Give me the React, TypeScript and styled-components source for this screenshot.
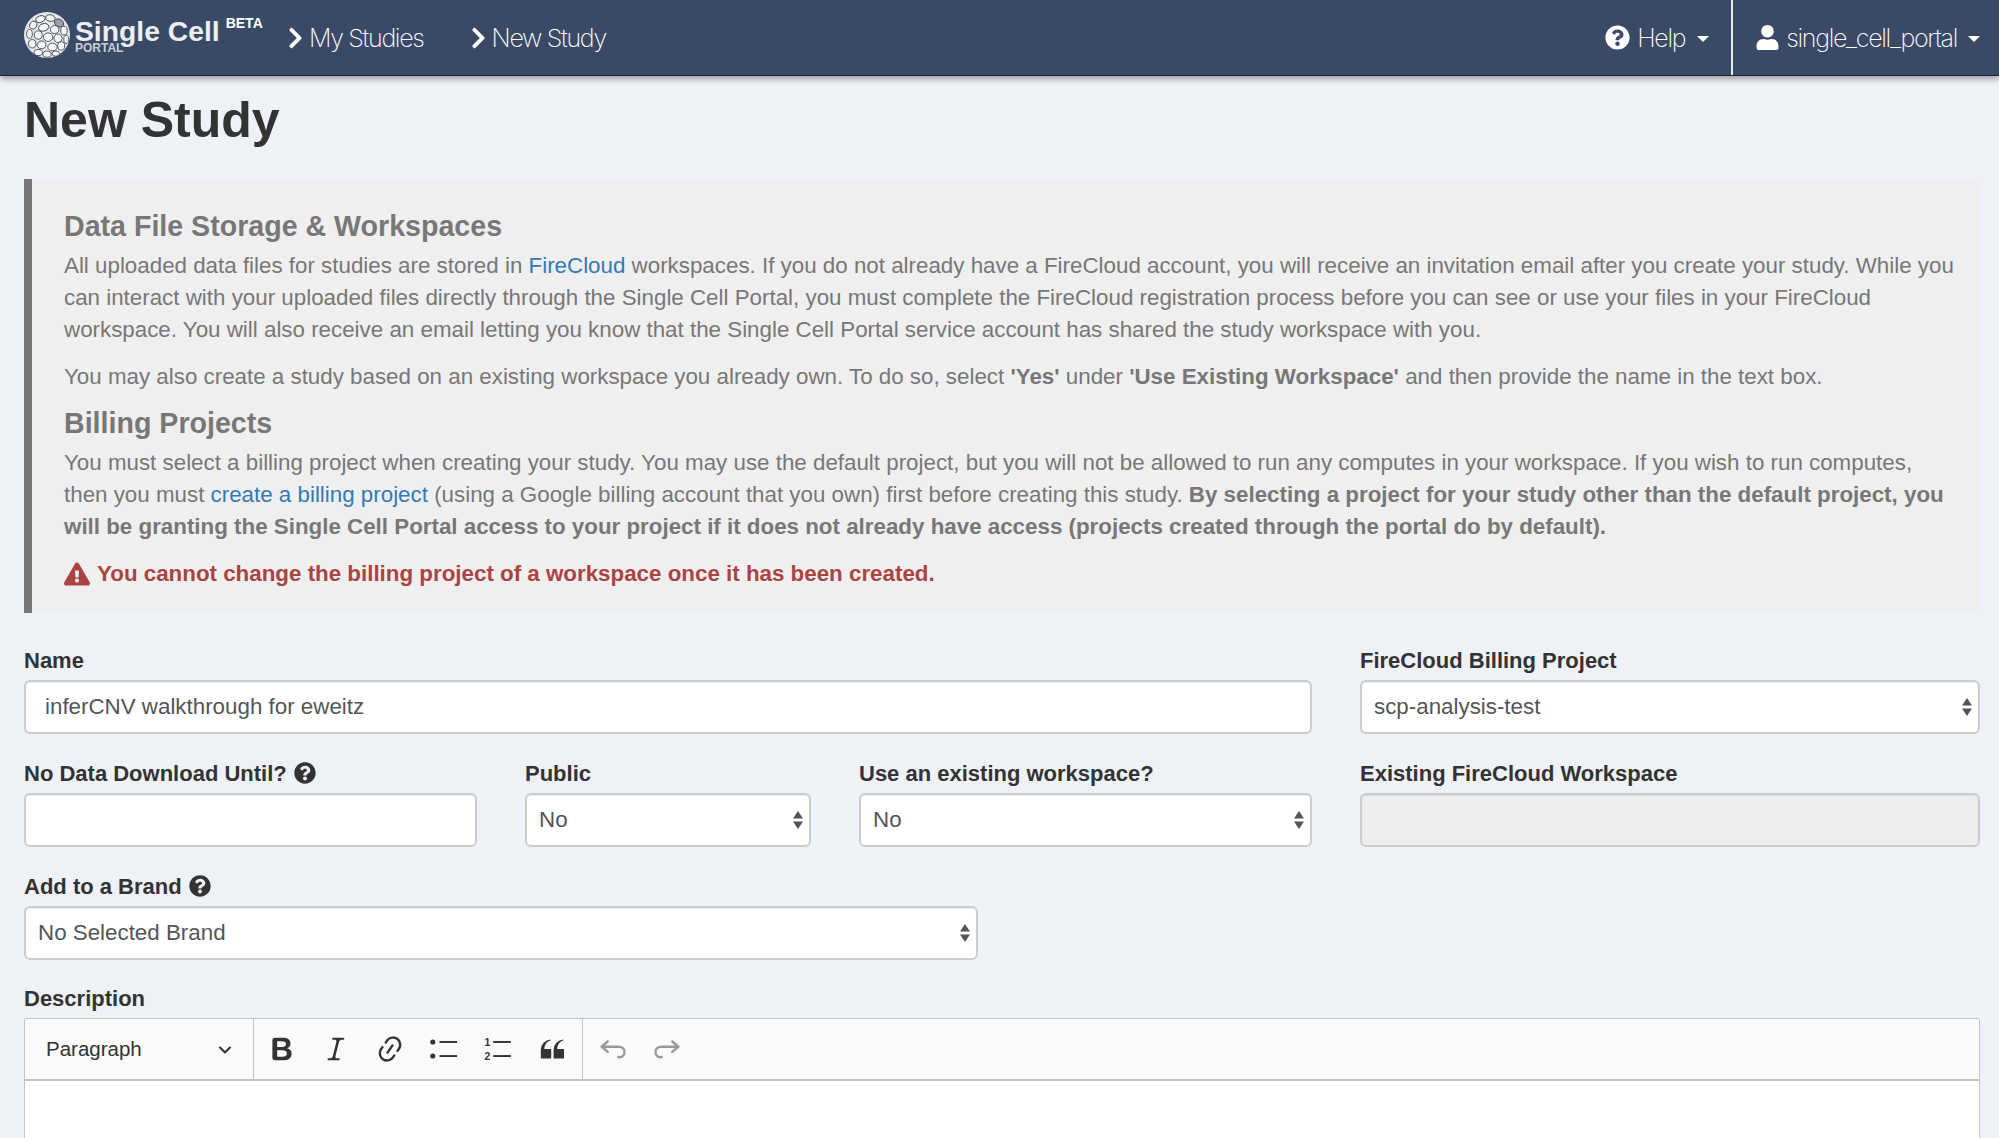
import React, { FC } from "react";
import styled, { createGlobalStyle } from "styled-components";
import { FaChevronRight, FaExclamationTriangle, FaQuestionCircle, FaUser } from "react-icons/fa";

const App: FC = () => {
  return (
    <Page>
      <GlobalStyle />
      <Navbar>
        <Brand>
          <LogoMark />
          <BrandText>
            <BrandName>Single Cell</BrandName>
            <BrandSub>PORTAL</BrandSub>
          </BrandText>
          <Beta>BETA</Beta>
        </Brand>
        <NavLink><FaChevronRight />My Studies</NavLink>
        <NavLink><FaChevronRight />New Study</NavLink>
        <NavRight>
          <HelpItem><FaQuestionCircle />Help<Caret /></HelpItem>
          <UserItem><FaUser />single_cell_portal<Caret /></UserItem>
        </NavRight>
      </Navbar>

      <Content>
        <Title>New Study</Title>
        <Notice>
          <NoticeHeading>Data File Storage &amp; Workspaces</NoticeHeading>
          <NoticeText>
            All uploaded data files for studies are stored in <Link>FireCloud</Link> workspaces. If you do not already have a FireCloud account, you will receive an invitation email after you create your study. While you can interact with your uploaded files directly through the Single Cell Portal, you must complete the FireCloud registration process before you can see or use your files in your FireCloud workspace. You will also receive an email letting you know that the Single Cell Portal service account has shared the study workspace with you.
          </NoticeText>
          <NoticeText>
            You may also create a study based on an existing workspace you already own. To do so, select <b>'Yes'</b> under <b>'Use Existing Workspace'</b> and then provide the name in the text box.
          </NoticeText>
          <NoticeHeading>Billing Projects</NoticeHeading>
          <NoticeText>
            You must select a billing project when creating your study. You may use the default project, but you will not be allowed to run any computes in your workspace. If you wish to run computes, then you must <Link>create a billing project</Link> (using a Google billing account that you own) first before creating this study. <b>By selecting a project for your study other than the default project, you will be granting the Single Cell Portal access to your project if it does not already have access (projects created through the portal do by default).</b>
          </NoticeText>
          <Warning><FaExclamationTriangle />You cannot change the billing project of a workspace once it has been created.</Warning>
        </Notice>

        <FormGrid>
          <Field $span={8}>
            <Label>Name</Label>
            <Input $pad={19} defaultValue="inferCNV walkthrough for eweitz" />
          </Field>
          <Field $span={4}>
            <Label>FireCloud Billing Project</Label>
            <SelectBox value="scp-analysis-test" />
          </Field>

          <Field $span={3}>
            <Label>No Data Download Until? <FaQuestionCircle /></Label>
            <Input $pad={19} />
          </Field>
          <Field $span={2}>
            <Label>Public</Label>
            <SelectBox value="No" />
          </Field>
          <Field $span={3}>
            <Label>Use an existing workspace?</Label>
            <SelectBox value="No" />
          </Field>
          <Field $span={4}>
            <Label>Existing FireCloud Workspace</Label>
            <Input $pad={19} disabled />
          </Field>

          <Field $span={6}>
            <Label>Add to a Brand <FaQuestionCircle /></Label>
            <SelectBox value="No Selected Brand" />
          </Field>
        </FormGrid>

        <DescriptionLabel>Description</DescriptionLabel>
        <Editor>
          <Toolbar>
            <HeadingDropdown>
              Paragraph
              <svg width="14" height="14" viewBox="0 0 10 10"><path d="M.941 4.523a.75.75 0 1 1 1.06-1.06l3.006 3.005 3.005-3.005a.75.75 0 1 1 1.06 1.06l-3.549 3.55a.75.75 0 0 1-1.168-.136L.941 4.523z" fill="#333" /></svg>
            </HeadingDropdown>
            <ToolGroup>
              <ToolIcon d="M10.187 17H5.773c-.637 0-1.092-.138-1.364-.415-.273-.277-.409-.718-.409-1.323V4.738c0-.617.14-1.062.419-1.332.279-.27.73-.406 1.354-.406h4.68c.69 0 1.288.041 1.793.124.506.083.96.242 1.36.478.341.197.644.447.906.75a3.262 3.262 0 0 1 .808 2.162c0 1.401-.722 2.426-2.167 3.075C15.05 10.175 16 11.315 16 13.01a3.756 3.756 0 0 1-2.296 3.504 6.1 6.1 0 0 1-1.517.377c-.571.073-1.238.11-2 .11zm-.217-6.217H7v4.087h3.069c1.977 0 2.965-.69 2.965-2.072 0-.707-.256-1.22-.768-1.537-.512-.319-1.277-.478-2.296-.478zM7 5.13v3.619h2.606c.729 0 1.292-.067 1.69-.2a1.6 1.6 0 0 0 .91-.765c.165-.267.247-.566.247-.897 0-.707-.26-1.176-.778-1.409-.519-.232-1.31-.348-2.375-.348H7z" />
              <ToolIcon d="m9.586 14.633.021.004c-.036.335.095.655.393.962.082.083.173.15.274.201h1.474a.6.6 0 1 1 0 1.2H5.304a.6.6 0 0 1 0-1.2h1.15c.474-.07.809-.182 1.005-.334.157-.122.291-.32.404-.597l2.416-9.55a1.053 1.053 0 0 0-.281-.823 1.12 1.12 0 0 0-.442-.296H8.15a.6.6 0 0 1 0-1.2h6.443a.6.6 0 1 1 0 1.2h-1.195c-.376.056-.65.155-.823.296-.215.175-.423.439-.623.79l-2.366 9.347z" />
              <ToolIcon d="m11.077 15 .991-1.416a.75.75 0 1 1 1.229.86l-1.148 1.64a.748.748 0 0 1-.217.206 5.251 5.251 0 0 1-8.503-5.955.741.741 0 0 1 .12-.274l1.147-1.639a.75.75 0 1 1 1.228.86L4.933 10.7l.006.003a3.75 3.75 0 0 0 6.132 4.294l.006.004zm5.494-5.335a.748.748 0 0 1-.12.274l-1.147 1.639a.75.75 0 1 1-1.228-.86l.86-1.23a3.75 3.75 0 0 0-6.144-4.301l-.86 1.229a.75.75 0 0 1-1.229-.86l1.148-1.64a.748.748 0 0 1 .217-.206 5.251 5.251 0 0 1 8.503 5.955zm-4.563-2.532a.75.75 0 0 1 .184 1.045l-3.155 4.505a.75.75 0 1 1-1.229-.86l3.155-4.506a.75.75 0 0 1 1.045-.184z" />
              <ToolSvg viewBox="0 0 20 20">
                <circle cx="3" cy="5.6" r="1.6" fill="#333" />
                <circle cx="3" cy="14.4" r="1.6" fill="#333" />
                <rect x="7.2" y="5" width="11" height="1.2" fill="#333" />
                <rect x="7.2" y="13.8" width="11" height="1.2" fill="#333" />
              </ToolSvg>
              <ToolSvg viewBox="0 0 20 20">
                <text x="1.5" y="8" fontSize="6.5" fontFamily="Liberation Sans" fontWeight="700" fill="#333">1</text>
                <text x="1.5" y="17" fontSize="6.5" fontFamily="Liberation Sans" fontWeight="700" fill="#333">2</text>
                <rect x="7" y="5" width="11" height="1.2" fill="#333" />
                <rect x="7" y="13.8" width="11" height="1.2" fill="#333" />
              </ToolSvg>
              <ToolIcon d="M3 10.423a6.5 6.5 0 0 1 6.056-6.408l.038.67C6.448 5.423 5.354 7.663 5.22 10H9c.552 0 .5.432.5.986v4.511c0 .554-.448.503-1 .503h-5c-.552 0-.5-.449-.5-1.003v-4.574zm8 0a6.5 6.5 0 0 1 6.056-6.408l.038.67c-2.646.739-3.74 2.979-3.873 5.315H17c.552 0 .5.432.5.986v4.511c0 .554-.448.503-1 .503h-5c-.552 0-.5-.449-.5-1.003v-4.574z" />
            </ToolGroup>
            <ToolGroup>
              <ToolIcon $muted d="m5.042 9.367 2.189 1.837a.75.75 0 0 1-.965 1.149l-3.788-3.18a.747.747 0 0 1-.21-.284.75.75 0 0 1 .17-.945L6.23 4.762a.75.75 0 1 1 .964 1.15L4.863 7.866h8.917A.75.75 0 0 1 14 7.9a4 4 0 1 1-1.477 7.718l.344-1.489a2.5 2.5 0 1 0 1.094-4.73l.008-.032H5.042z" />
              <ToolIcon $muted d="m14.958 9.367-2.189 1.837a.75.75 0 0 0 .965 1.149l3.788-3.18a.747.747 0 0 0 .21-.284.75.75 0 0 0-.17-.945L13.77 4.762a.75.75 0 1 0-.964 1.15l2.331 1.955H6.22A.75.75 0 0 0 6 7.9a4 4 0 1 0 1.477 7.718l-.344-1.489A2.5 2.5 0 1 1 6.039 9.4l-.008-.032h8.927z" />
            </ToolGroup>
          </Toolbar>
          <EditorBody />
        </Editor>
      </Content>
    </Page>
  );
};

export default App;

const LOGO_CELLS: [number, number, number, number, number][] = [
  [15, 6.5, 4.4, 3, -20], [24, 5.5, 4.4, 3, 10], [32, 10, 4.4, 3.4, 30], [8.5, 12, 3.2, 3.8, 30], [18, 14, 4.8, 3.4, -15],
  [28, 16, 3.9, 3.7, 0], [36.5, 17, 3, 4, 0], [5, 20, 2.6, 4, 0], [13, 21, 3.6, 3.8, 0], [22, 23, 4.3, 3.9, 0],
  [31, 24, 3.7, 3.9, 0], [38.5, 25, 2.2, 3.8, 0], [7.5, 29, 3.4, 3.8, 0], [16, 30, 4, 3.6, 0], [26, 32, 4.3, 3.5, 0],
  [34, 31, 3.2, 3.8, 0], [13, 37, 3.8, 2.8, 0], [21, 38.5, 3.8, 2.8, 0], [29, 38, 3.4, 2.4, 0],
];

const LogoMark: FC = () => (
  <LogoSvg viewBox="0 0 42 42">
    <circle cx="21" cy="21" r="21" fill="#e6e8eb" />
    {LOGO_CELLS.map(([cx, cy, rx, ry, rot], i) => (
      <ellipse
        key={i}
        cx={cx}
        cy={cy}
        rx={rx}
        ry={ry}
        transform={`rotate(${rot} ${cx} ${cy})`}
        fill={i === 2 ? "#9aa0ab" : "#f6f7f8"}
        stroke="#39424f"
        strokeWidth="0.8"
      />
    ))}
  </LogoSvg>
);

const SelectBox: FC<{ value: string }> = ({ value }) => (
  <SelectWrap>
    <Select defaultValue={value}>
      <option>{value}</option>
    </Select>
    <SelectArrows viewBox="0 0 10 20">
      <path d="M5 1 10 8.5H0z" fill="#555" />
      <path d="M5 19 0 11.5h10z" fill="#555" />
    </SelectArrows>
  </SelectWrap>
);

const ToolIcon: FC<{ d: string; $muted?: boolean }> = ({ d, $muted }) => (
  <ToolSvg viewBox="0 0 20 20">
    <path d={d} fill={$muted ? "#999" : "#333"} />
  </ToolSvg>
);

const GlobalStyle = createGlobalStyle`
  html, body {
    margin: 0;
    padding: 0;
    height: 100%;
    overflow: hidden;
    background: #eef1f5;
  }
  * {
    box-sizing: border-box;
  }
`;

const Page = styled.div`
  height: 1138px;
  overflow: hidden;
  font-family: "Liberation Sans", Arial, sans-serif;
  font-size: 22.35px;
  color: #333;
  background: #eef1f5;
`;

const Navbar = styled.header`
  height: 76px;
  display: flex;
  align-items: center;
  padding-left: 24px;
  background: #3a4a66;
  border-bottom: 1px solid #1a2233;
  box-shadow: 0 3px 6px rgba(0, 0, 0, 0.35);
  color: #fff;
  font-family: Inter, "Liberation Sans", sans-serif;
  font-weight: 200;
`;

const Brand = styled.div`
  display: flex;
  align-items: flex-start;
  width: 241px;
  height: 50px;
  margin-top: -1px;
`;

const LogoSvg = styled.svg`
  width: 46px;
  height: 46px;
  flex-shrink: 0;
`;

const BrandText = styled.div`
  margin-left: 5px;
  display: flex;
  flex-direction: column;
  font-family: "Liberation Sans", sans-serif;
  font-weight: 700;
`;

const BrandName = styled.span`
  font-size: 28.3px;
  line-height: 34px;
  color: #eceef1;
  white-space: nowrap;
  margin-top: 2px;
`;

const BrandSub = styled.span`
  font-size: 12px;
  line-height: 10px;
  margin-top: -5px;
  color: #c9ced6;
`;

const Beta = styled.span`
  margin-left: 6px;
  margin-top: 1px;
  font-family: "Liberation Sans", sans-serif;
  font-weight: 700;
  font-size: 14px;
  line-height: 20px;
`;

const NavLink = styled.a`
  display: flex;
  align-items: center;
  margin-left: 23px;
  margin-right: 24px;
  gap: 6px;
  font-size: 25px;
  letter-spacing: -1.3px;
  white-space: nowrap;
  svg {
    width: 15px;
    height: 24px;
  }
`;

const NavRight = styled.div`
  margin-left: auto;
  display: flex;
  height: 100%;
`;

const HelpItem = styled.div`
  display: flex;
  align-items: center;
  gap: 7px;
  padding-right: 22px;
  font-size: 25px;
  letter-spacing: -1.3px;
  svg {
    width: 25px;
    height: 25px;
  }
`;

const UserItem = styled(HelpItem)`
  border-left: 2px solid #e8eaee;
  padding-left: 22px;
  padding-right: 19px;
  gap: 6px;
`;

const Caret = styled.span`
  width: 0;
  height: 0;
  margin-left: 5px;
  margin-top: 3px;
  border-left: 6px solid transparent;
  border-right: 6px solid transparent;
  border-top: 6px solid #fff;
`;

const Content = styled.main`
  padding: 0 19px 0 24px;
`;

const Title = styled.h1`
  margin: 0;
  padding-top: 14px;
  height: 103px;
  font-size: 50px;
  line-height: 60px;
  font-weight: 700;
`;

const Notice = styled.section`
  height: 434px;
  padding: 29px 24px 0 32px;
  background: #efefef;
  border-left: 8px solid #777;
  color: #777;
`;

const NoticeHeading = styled.h3`
  margin: 0 0 6.3px;
  font-size: 28.6px;
  line-height: 36px;
  font-weight: 700;
  p + & {
    margin-top: -2.5px;
  }
`;

const NoticeText = styled.p`
  margin: 0 0 15px;
  line-height: 31.8px;
  b {
    font-weight: 700;
  }
`;

const Link = styled.a`
  color: #337ab7;
`;

const Warning = styled.p`
  margin: 0;
  display: flex;
  align-items: center;
  gap: 7px;
  color: #a94442;
  font-weight: 700;
  line-height: 32px;
  svg {
    width: 26px;
    height: 24px;
  }
`;

const FormGrid = styled.div`
  display: grid;
  grid-template-columns: repeat(12, 1fr);
  column-gap: 48px;
  row-gap: 25px;
  margin-top: 33px;
`;

const Field = styled.div<{ $span: number }>`
  grid-column: span ${(p) => p.$span};
  min-width: 0;
`;

const Label = styled.label`
  display: block;
  height: 34px;
  font-size: 22px;
  line-height: 30px;
  font-weight: 700;
  white-space: nowrap;
  svg {
    width: 22px;
    height: 22px;
    vertical-align: -3px;
    margin-left: 1px;
  }
`;

const DescriptionLabel = styled(Label)`
  margin-top: 24px;
`;

const Input = styled.input<{ $pad: number }>`
  display: block;
  width: 100%;
  height: 54px;
  padding: 0 ${(p) => p.$pad}px;
  font: inherit;
  color: #555;
  background: #fff;
  border: 2px solid #ccc;
  border-radius: 6px;
  box-shadow: inset 0 1px 1px rgba(0, 0, 0, 0.075);
  &:disabled {
    background: #eee;
  }
`;

const SelectWrap = styled.div`
  position: relative;
`;

const Select = styled.select`
  display: block;
  width: 100%;
  height: 54px;
  padding: 0 30px 2px 12px;
  appearance: none;
  font: inherit;
  color: #555;
  background: #fff;
  border: 2px solid #ccc;
  border-radius: 6px;
  box-shadow: inset 0 1px 1px rgba(0, 0, 0, 0.075);
`;

const SelectArrows = styled.svg`
  position: absolute;
  top: 17px;
  right: 8px;
  width: 10px;
  height: 20px;
`;

const Editor = styled.div`
  border: 1px solid #c4c4c4;
  border-radius: 2px 2px 0 0;
  background: #fff;
`;

const Toolbar = styled.div`
  height: 62px;
  display: flex;
  background: #fafafa;
  border-bottom: 2px solid #c4c4c4;
`;

const HeadingDropdown = styled.div`
  width: 229px;
  display: flex;
  align-items: center;
  justify-content: space-between;
  padding: 0 21px;
  font-size: 20.5px;
  color: #333;
  border-right: 1px solid #c4c4c4;
`;

const ToolGroup = styled.div`
  display: flex;
  align-items: center;
  gap: 22px;
  padding: 0 14px 0 12px;
  border-right: 1px solid #c4c4c4;
  &:last-child {
    border-right: none;
    padding-left: 14px;
  }
`;

const ToolSvg = styled.svg`
  width: 32px;
  height: 32px;
`;

const EditorBody = styled.div`
  height: 400px;
  background: #fff;
`;
